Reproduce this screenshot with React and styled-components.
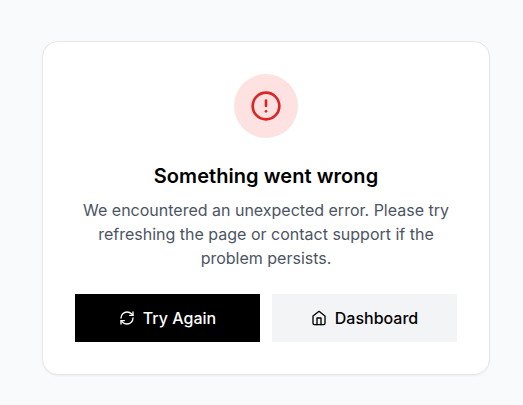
import React from "react";
import styled, { createGlobalStyle } from "styled-components";
import { CircleAlert, RefreshCw } from "lucide-react";

const GlobalStyle = createGlobalStyle`
  *, *::before, *::after { box-sizing: border-box; }
  body { margin: 0; background: #f9fafb; font-family: Inter, sans-serif; font-size: 16px; line-height: 24px; }
`;

const Page = styled.main`
  height: 100vh;
  overflow: hidden;
  padding: 41px 33px 0 42px;
`;

const Card = styled.section`
  display: flex;
  flex-direction: column;
  align-items: center;
  width: 448px;
  height: 334px;
  padding: 32px;
  background: #fff;
  border: 1px solid #e5e7eb;
  border-radius: 16px;
  box-shadow: 0 1px 2px rgba(0, 0, 0, 0.05);
  text-align: center;
`;

const IconCircle = styled.div`
  display: flex;
  align-items: center;
  justify-content: center;
  width: 64px;
  height: 64px;
  flex-shrink: 0;
  margin-bottom: 24px;
  border-radius: 50%;
  background: #fee2e2;
  color: #dc2626;
`;

const Title = styled.h1`
  margin: 0 0 8px;
  font-size: 20px;
  line-height: 28px;
  font-weight: 600;
  letter-spacing: 0.06px;
  color: #000;
`;

const Message = styled.p`
  margin: 0 0 24px;
  color: #4b5563;
`;

const Actions = styled.div`
  display: flex;
  gap: 12px;
  width: 100%;
`;

const Button = styled.button`
  flex: 1;
  display: flex;
  align-items: center;
  justify-content: center;
  gap: 8px;
  height: 48px;
  padding: 0;
  border: 0;
  font: 500 16px/24px Inter, sans-serif;
  background: ${({ $primary }) => ($primary ? "#000" : "#f3f4f6")};
  color: ${({ $primary }) => ($primary ? "#fff" : "#000")};
`;

const OutlineIcon = styled.svg`
  width: 16px;
  height: 16px;
  fill: none;
  stroke: currentColor;
  stroke-width: 2;
  stroke-linecap: round;
  stroke-linejoin: round;
`;

function HomeIcon() {
  return (
    <OutlineIcon viewBox="0 0 24 24" aria-hidden="true">
      <path d="m3 9 9-7 9 7v11a2 2 0 0 1-2 2H5a2 2 0 0 1-2-2z" />
      <polyline points="9 22 9 12 15 12 15 22" />
    </OutlineIcon>
  );
}

export default function App() {
  return (
    <>
      <GlobalStyle />
      <Page>
        <Card>
          <IconCircle><CircleAlert size={32} /></IconCircle>
          <Title>Something went wrong</Title>
          <Message>
            We encountered an unexpected error. Please try refreshing the page or contact support if the problem persists.
          </Message>
          <Actions>
            <Button $primary><RefreshCw size={16} />Try Again</Button>
            <Button><HomeIcon />Dashboard</Button>
          </Actions>
        </Card>
      </Page>
    </>
  );
}
